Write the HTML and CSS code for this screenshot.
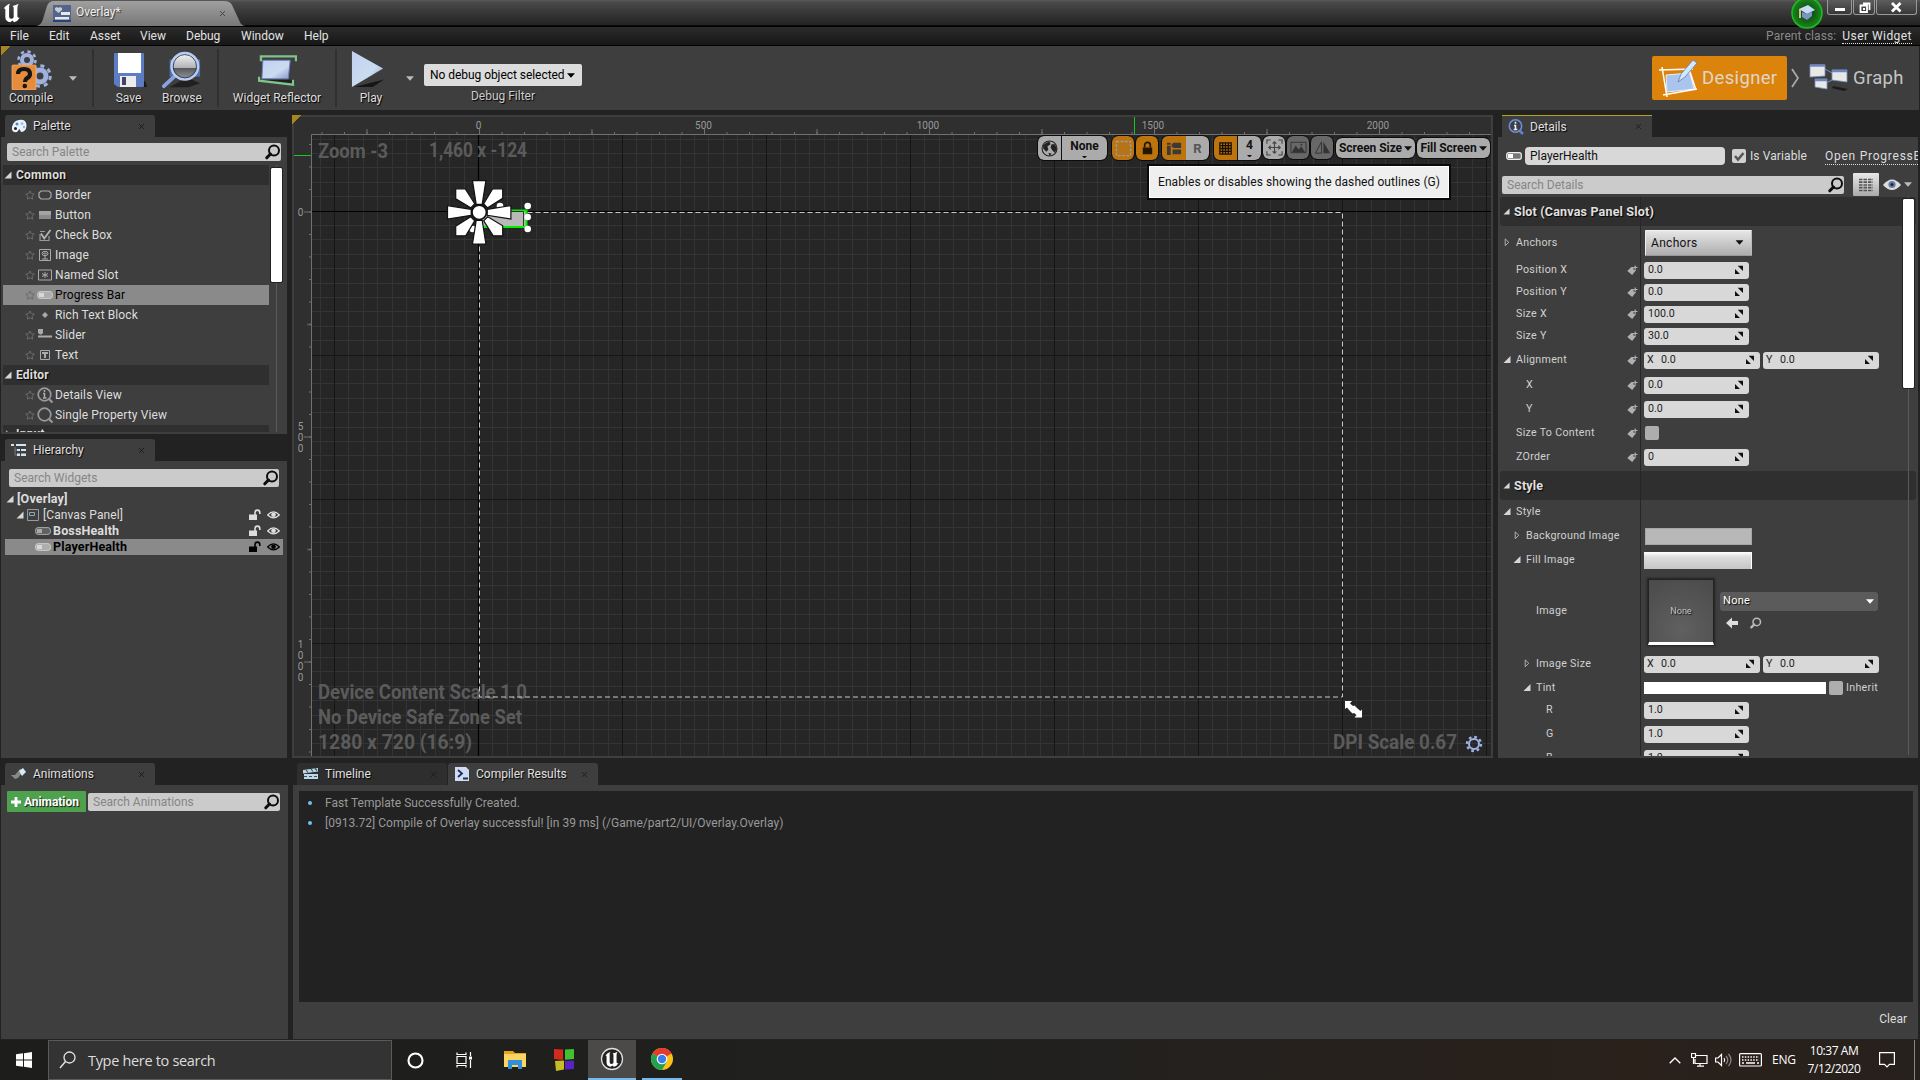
FILE: index.html
```html
<!DOCTYPE html>
<html lang="en">
<head>
<meta charset="utf-8">
<title>Overlay</title>
<link rel="stylesheet" href="styles.css">
</head>
<body>
<svg class="defs" width="0" height="0" aria-hidden="true">
  <defs>
    <linearGradient id="blue" x1="0" y1="0" x2="1" y2="1"><stop offset="0" stop-color="#c3d0f0"/><stop offset=".6" stop-color="#c9dcf0"/><stop offset="1" stop-color="#8596c8"/></linearGradient>
    <linearGradient id="steel" x1="0" y1="0" x2="0" y2="1"><stop offset="0" stop-color="#fafafa"/><stop offset=".55" stop-color="#b4b4b8"/><stop offset=".56" stop-color="#55565a"/><stop offset="1" stop-color="#9a9a9a"/></linearGradient>
  </defs>
  <symbol id="mag" viewBox="0 0 16 16"><circle cx="9" cy="6.500" r="5" fill="none" stroke="currentColor" stroke-width="2"/><path d="M5.500 10 1.800 13.800" stroke="currentColor" stroke-width="3" stroke-linecap="round"/></symbol>
  <symbol id="x" viewBox="0 0 8 8"><path d="M1.200 1.200l5.600 5.600M6.800 1.200L1.200 6.800" stroke="currentColor" stroke-width="1.100"/></symbol>
  <symbol id="star" viewBox="0 0 10 10"><path d="M5 .9l1.300 2.800 3 .4-2.200 2.100.5 3L5 7.700 2.400 9.200l.5-3L.7 4.100l3-.4z" fill="none" stroke="#6c6c6c"/></symbol>
  <symbol id="open" viewBox="0 0 8 8"><path d="M7.500 .5v7h-7z" fill="#d6d6d6"/></symbol>
  <symbol id="shut" viewBox="0 0 8 10"><path d="M2 1v7.500l4-3.700z" fill="none" stroke="#bbb"/></symbol>
  <symbol id="bar" viewBox="0 0 16 10"><rect x=".6" y="1.600" width="14.800" height="6.800" rx="2.500" fill="#606060" stroke="#aaa"/><rect x="2" y="3" width="5" height="4" fill="#aaa"/></symbol>
  <symbol id="barsel" viewBox="0 0 16 10"><rect x=".6" y="1.600" width="14.800" height="6.800" rx="2.500" fill="#adadad" stroke="#cacaca"/><rect x="2" y="3" width="5" height="4" fill="#d8d8d8"/></symbol>
  <symbol id="lock" viewBox="0 0 12 12"><rect x="0" y="5.500" width="8" height="5.500" fill="currentColor"/><path d="M6 6V3.500a2.300 2.300 0 0 1 4.800 0V5" fill="none" stroke="currentColor" stroke-width="1.600"/></symbol>
  <symbol id="eye" viewBox="0 0 14 10"><path d="M.7 5Q7-1.700 13.300 5 7 11 .7 5z" fill="none" stroke="currentColor" stroke-width="1.300"/><circle cx="7" cy="4.700" r="2.500" fill="currentColor"/></symbol>
  <symbol id="tag" viewBox="0 0 11 11"><path d="M.3 6L4.300 2h2.200v2.800h2.800L5.200 10z" fill="#b0b0b0"/><path d="M8.200 .5v4M6.200 2.500h4.300" stroke="#b0b0b0" stroke-width="1.200"/></symbol>
  <symbol id="spin" viewBox="0 0 10 10"><path d="M3.700 .7h5.300v5.300zM1 4v5h5z" fill="#111"/></symbol>
  <symbol id="down" viewBox="0 0 8 5"><path d="M0 .3h8L4 4.800z" fill="currentColor"/></symbol>
  <symbol id="ue" viewBox="0 0 24 24"><path d="M2 7Q5 2 10 1q-2 1.500-1.500 4v11q0 3 2.500 3 2 0 3-2V6q0-2-1.500-2.500Q17 2.500 20 1q-1.500 2-1.500 5v10q0 2.500 3 1.500Q19 22 14.500 23L12.500 21 10 23Q4 22 4 17V8q0-2-2-1z" fill="#fff"/></symbol>
</svg>

<div class="screen">
  <header class="titlebar">
    <svg class="logo" viewBox="0 0 24 24"><use href="#ue"/></svg>
    <div class="doc-tab">
      <svg class="tab-shape" viewBox="0 0 210 25" preserveAspectRatio="none"><defs><linearGradient id="tg" x2="0" y2="1"><stop stop-color="#a0a0a0"/><stop offset="1" stop-color="#777"/></linearGradient></defs><path d="M0 25Q5 25 7 18L11 5Q13 0 18 0H188Q194 0 196 4L203 19Q205 25 210 25z" fill="url(#tg)"/></svg>
      <svg class="doc-icon" viewBox="0 0 18 17"><path d="M0 0h18v17H0z" fill="#51658d"/><path d="M2 3l2-1 1.500 1L7 2l2 1v2L5.500 8 2 5z" fill="#ccc"/><path d="M8 7h9v3H8zM2 12h14v2.500H2z" fill="#e8e8e8"/><path d="M0 16h18" stroke="#27437d" stroke-width="2"/></svg>
      <span class="doc-name">Overlay*</span>
      <svg class="x" viewBox="0 0 8 8"><use href="#x"/></svg>
    </div>
    <svg class="tutorial" viewBox="0 0 32 29"><defs><radialGradient id="rg"><stop offset=".3" stop-color="#144b16"/><stop offset="1" stop-color="#178a1a"/></radialGradient></defs><circle cx="16" cy="13" r="15" fill="url(#rg)" stroke="#20bb22" stroke-width="1.500"/><path d="M8 9l9-4 7 5-8 4z" fill="#c6dcf5"/><path d="M11 12v5l5 3 5-4v-5l-5 3z" fill="#7796c0"/><path d="M9 9v9" stroke="#e5cf9d" stroke-width="1.800"/></svg>
    <div class="winbtns">
      <span class="wb wb1"><svg viewBox="0 0 24 15"><path d="M7 8h10v3H7z" fill="#fff"/></svg></span>
      <span class="wb wb2"><svg viewBox="0 0 22 15"><path d="M9 3.500h6.500v6.500M6.500 5.500H13V12H6.500z" fill="none" stroke="#fff" stroke-width="1.800"/><path d="M9 8h2v2H9z" fill="#fff"/></svg></span>
      <span class="wb wb3"><svg viewBox="0 0 40 15"><path d="M15 3l8.500 8.500M23.500 3L15 11.500" stroke="#fff" stroke-width="2.800"/></svg></span>
    </div>
  </header>

  <nav class="menubar">
    <span class="m1">File</span><span class="m2">Edit</span><span class="m3">Asset</span><span class="m4">View</span><span class="m5">Debug</span><span class="m6">Window</span><span class="m7">Help</span>
    <span class="parent">Parent class:</span><a class="userwidget">User Widget</a>
  </nav>

  <section class="toolbar">
    <i class="corner"></i>
    <div class="tool t-compile"><svg viewBox="0 0 42 40"><g fill="none" stroke="#9fb1dc"><circle cx="17" cy="10" r="5" stroke-width="4"/><circle cx="17" cy="10" r="8.500" stroke-width="2.500" stroke-dasharray="3.300 3.400"/><circle cx="30" cy="26" r="6" stroke-width="5"/><circle cx="30" cy="26" r="10.300" stroke-width="3" stroke-dasharray="4 4.100"/></g><rect x="2" y="15" width="24" height="25" rx="1" fill="#e58d3d" stroke="#f3b678" stroke-width=".7"/><path d="M8 24q0-5 6-5t6 5q0 3-3.500 4.500Q15 30 15 32" fill="none" stroke="#161616" stroke-width="4.200"/><circle cx="14.800" cy="36" r="2.300" fill="#161616"/></svg><span>Compile</span></div>
    <svg class="dd dd1" viewBox="0 0 8 5"><use href="#down"/></svg>
    <i class="sep s1"></i>
    <div class="tool t-save"><svg viewBox="0 0 34 40"><path d="M5 37h29l-2-6z" fill="#171717"/><path d="M1 4q0-1 1-1h28q1 0 1 1v32q0 1-1 1H5l-4-3z" fill="#5d7cc4"/><path d="M5 3h23v20H5z" fill="#fff"/><path d="M7 26h16v11H7z" fill="#ececec"/><path d="M9 27h4v8H9z" fill="#446"/></svg><span>Save</span></div>
    <div class="tool t-browse"><svg viewBox="0 0 42 40"><path d="M8 38l18-10 14 6-12 4z" fill="#202020"/><path d="M8 9h32v18H8z" fill="#5370a8"/><path d="M2 37L14 26" stroke="#86a3e0" stroke-width="4" stroke-linecap="round"/><circle cx="24" cy="16" r="14" fill="url(#steel)" stroke="#b9cdf4" stroke-width="2.500"/><circle cx="24" cy="16" r="12.200" fill="none" stroke="#33405e"/></svg><span>Browse</span></div>
    <i class="sep s2"></i>
    <div class="tool t-widget"><svg viewBox="0 0 40 40"><path d="M8 30h30v5L8 33z" fill="#202020"/><path d="M5 10h28l-2 19H4z" fill="url(#blue)" stroke="#6b7fc2"/><path d="M3 11V6h36v5M1 27v4l35 4v-5" fill="none" stroke="#7fc48a" stroke-width="2.400"/></svg><span>Widget Reflector</span></div>
    <i class="sep s3"></i>
    <div class="tool t-play"><svg viewBox="0 0 36 40"><path d="M3 38l32-8-12 8z" fill="#161616"/><path d="M1 0l33 18.500L1 38z" fill="url(#blue)"/></svg><span>Play</span></div>
    <svg class="dd dd2" viewBox="0 0 8 5"><use href="#down"/></svg>
    <div class="debug"><div class="debug-combo"><span>No debug object selected</span><svg viewBox="0 0 8 5"><use href="#down"/></svg></div><span class="debug-label">Debug Filter</span></div>
    <div class="modes">
      <div class="designer"><svg viewBox="0 0 40 40"><path d="M8 17l24-2 4 16-27 3z" fill="#a9c5ee" stroke="#e6efff"/><path d="M1 12l34-1M5 37l34-6M4 9l5 30M30 8l8 24" stroke="#fff" stroke-width="1.500"/><path d="M20 24l3-8L35 2l4 3-12 14z" fill="#d5e6ff" stroke="#5f7bb5" stroke-width=".8"/></svg><span>Designer</span></div>
      <svg class="chev" viewBox="0 0 8 20"><path d="M1 1l6 9-6 9" fill="none" stroke="#aaa" stroke-width="1.800"/></svg>
      <svg class="gicon" viewBox="0 0 40 28"><path d="M16 5l7 4M15 20l8-4" stroke="#7690b5"/><path d="M24 22l15 3-4 2-12-3z" fill="#1b1b1b"/><g fill="#e8e8e8" stroke="#7c93ba" stroke-width=".8"><path d="M1 1h15v11l-15 1zM23 6h15v12l-15-2zM6 15h12v10l-12-2z"/></g><path d="M1 1.500h15M23 7h15M6 16h12" stroke="#6d86c0" stroke-width="2.500"/></svg>
      <span class="graph">Graph</span>
    </div>
  </section>

  <main class="upper">
    <div class="leftcol">
      <section class="panel palette">
        <div class="tabs"><div class="tab"><svg class="ticon" viewBox="0 0 16 14"><path d="M1 8Q2 2 8 1q7-1 7.500 5Q15.500 13 10 13L8.500 10 6 13q-6 1-5-5z" fill="#eaf2fb"/><circle cx="6" cy="5" r="1.500" fill="#4b88c8"/><circle cx="11" cy="4.500" r="1.500" fill="#9cc4ee"/><circle cx="4.500" cy="9.500" r="1.500" fill="#222"/><circle cx="13" cy="8" r="1.200" fill="#8db8ea"/></svg><span>Palette</span><svg class="x" viewBox="0 0 8 8"><use href="#x"/></svg></div></div>
        <div class="pbody">
          <div class="search sp"><span>Search Palette</span><svg viewBox="0 0 16 16"><use href="#mag"/></svg></div>
          <div class="plist">
            <div class="rows">
              <div class="cat"><svg viewBox="0 0 8 8"><use href="#open"/></svg>Common</div>
              <div class="row"><svg class="st"><use href="#star"/></svg><svg class="ic" viewBox="0 0 16 16"><path d="M4 4h8l2 2v4l-2 2H4l-2-2V6z" fill="none" stroke="#aaa" stroke-width="1.200"/></svg>Border</div>
              <div class="row"><svg class="st"><use href="#star"/></svg><svg class="ic" viewBox="0 0 16 16"><path d="M2 4h12v8H2z" fill="#8a8a8a"/><path d="M2 4h12v4H2z" fill="#a4a4a4"/></svg>Button</div>
              <div class="row"><svg class="st"><use href="#star"/></svg><svg class="ic" viewBox="0 0 16 16"><path d="M8 4.500H3M3 7v6.500h9V9" fill="none" stroke="#999" stroke-width="1.200"/><path d="M4 6.500l3.200 5L13.500 3" fill="none" stroke="#b5b5b5" stroke-width="1.800"/></svg>Check Box</div>
              <div class="row"><svg class="st"><use href="#star"/></svg><svg class="ic" viewBox="0 0 16 16"><path d="M2.500 2.500h11v11h-11zM5 12h6M8 8v4" fill="none" stroke="#aaa"/><ellipse cx="8" cy="6.500" rx="3" ry="2.200" fill="none" stroke="#aaa"/><path d="M6 6.500h4M8 5v3" stroke="#888"/></svg>Image</div>
              <div class="row"><svg class="st"><use href="#star"/></svg><svg class="ic" viewBox="0 0 16 16"><path d="M1.500 3h13v10h-13z" fill="none" stroke="#aaa"/><path d="M8 5v6M5 6.500l6 3M11 6.500l-6 3" stroke="#aaa"/></svg>Named Slot</div>
              <div class="row sel"><svg class="st"><use href="#star"/></svg><svg class="ic" viewBox="0 0 16 10"><use href="#barsel"/></svg>Progress Bar</div>
              <div class="row"><svg class="st"><use href="#star"/></svg><svg class="ic" viewBox="0 0 16 16"><path d="M8 5l3 3-3 3-3-3z" fill="#aaa"/></svg>Rich Text Block</div>
              <div class="row"><svg class="st"><use href="#star"/></svg><svg class="ic" viewBox="0 0 16 16"><path d="M1 2h5v4L4.500 7.500H3L1 6zM1 8.500h14v2H1z" fill="#aaa"/></svg>Slider</div>
              <div class="row"><svg class="st"><use href="#star"/></svg><svg class="ic" viewBox="0 0 16 16"><path d="M3.500 3.500h9v9h-9z" fill="none" stroke="#aaa"/><path d="M5 6h6M8 6v5" stroke="#aaa" stroke-width="2"/></svg>Text</div>
              <div class="cat"><svg viewBox="0 0 8 8"><use href="#open"/></svg>Editor</div>
              <div class="row"><svg class="st"><use href="#star"/></svg><svg class="ic" viewBox="0 0 16 16"><circle cx="7.500" cy="7.500" r="6.300" fill="none" stroke="#999" stroke-width="1.700"/><path d="M12 12l3.500 3.500" stroke="#999" stroke-width="2.200"/><path d="M7.500 3v2M6 6.500h1.500V11M6 11h3.500" fill="none" stroke="#aaa" stroke-width="1.500"/></svg>Details View</div>
              <div class="row"><svg class="st"><use href="#star"/></svg><svg class="ic" viewBox="0 0 16 16"><circle cx="7.500" cy="7.500" r="6.300" fill="none" stroke="#999" stroke-width="1.700"/><path d="M12 12l3.500 3.500" stroke="#999" stroke-width="2.200"/></svg>Single Property View</div>
              <div class="cat part"><svg viewBox="0 0 8 10"><use href="#shut"/></svg>Input</div>
            </div>
            <div class="scroll"><i></i></div>
          </div>
        </div>
      </section>

      <section class="panel hierarchy">
        <div class="tabs"><div class="tab"><svg class="ticon" viewBox="0 0 16 14"><path d="M0 1h3v2H0zM5 1h10v2H5zM6 6h3v2H6zM10 6h5v2h-5zM6 10.500h3v2.500H6zM10 10.500h5v2.500h-5z" fill="#cfe5f2"/><path d="M4 4v8M4 7h2M4 12h2" stroke="#778"/></svg><span>Hierarchy</span><svg class="x" viewBox="0 0 8 8"><use href="#x"/></svg></div></div>
        <div class="pbody">
          <div class="search sh"><span>Search Widgets</span><svg viewBox="0 0 16 16"><use href="#mag"/></svg></div>
          <div class="trees">
            <div class="tree d0"><svg class="ar" viewBox="0 0 8 8"><use href="#open"/></svg><b>[Overlay]</b></div>
            <div class="tree d1"><svg class="ar" viewBox="0 0 8 8"><use href="#open"/></svg><svg class="cp" viewBox="0 0 12 12"><path d="M.5 .5h11v11H.5z" fill="none" stroke="#999"/><path d="M2.500 3.500h5v3h-5z" fill="none" stroke="#8ab"/></svg><span>[Canvas Panel]</span><svg class="lk" viewBox="0 0 12 12"><use href="#lock"/></svg><svg class="ey" viewBox="0 0 14 10"><use href="#eye"/></svg></div>
            <div class="tree d2"><svg class="pb" viewBox="0 0 16 10"><use href="#bar"/></svg><b>BossHealth</b><svg class="lk" viewBox="0 0 12 12"><use href="#lock"/></svg><svg class="ey" viewBox="0 0 14 10"><use href="#eye"/></svg></div>
            <div class="tree d2 sel"><svg class="pb" viewBox="0 0 16 10"><use href="#barsel"/></svg><b>PlayerHealth</b><svg class="lk" viewBox="0 0 12 12"><use href="#lock"/></svg><svg class="ey" viewBox="0 0 14 10"><use href="#eye"/></svg></div>
          </div>
        </div>
      </section>
    </div>

    <section class="viewport">
      <svg class="canvas" viewBox="294 117 1197 639">
        <defs>
          <pattern id="grid" patternUnits="userSpaceOnUse" x="478" y="211" width="144" height="144">
            <g stroke="#343434" stroke-width="1"><path d="M14.500 0v144M29.500 0v144M43.500 0v144M58.500 0v144M72.500 0v144M86.500 0v144M101.500 0v144M115.500 0v144M130.500 0v144"/><path d="M0 14.500h144M0 28.500h144M0 43.500h144M0 57.500h144M0 72.500h144M0 86.500h144M0 100.500h144M0 115.500h144M0 129.500h144"/></g>
            <path d="M0 .5H144M.5 0V144" stroke="#151515"/>
          </pattern>
          <pattern id="rh" patternUnits="userSpaceOnUse" x="479" y="0" width="22.500" height="135"><path d="M.5 132v3" stroke="#707070"/></pattern>
          <pattern id="rhm" patternUnits="userSpaceOnUse" x="479" y="0" width="112.500" height="135"><path d="M.5 129v6" stroke="#707070"/></pattern>
          <pattern id="rv" patternUnits="userSpaceOnUse" x="294" y="211.500" width="18" height="22.500"><path d="M15 .5h3" stroke="#707070"/></pattern>
          <pattern id="rvm" patternUnits="userSpaceOnUse" x="294" y="211.500" width="18" height="225"><path d="M10 .5h8M13 113h5" stroke="#707070"/></pattern>
        </defs>
        <path d="M294 117h1197v639H294z" fill="#2f2f2f"/>
        <path d="M312 135h1179v621H312z" fill="#262626"/>
        <path d="M312 135h1179v621H312z" fill="url(#grid)"/>
        <path d="M478.500 135v621M312 211.500h1179" stroke="#000" stroke-width="1.200"/>
        <path d="M312 117h1179v18H312z" fill="url(#rh)"/><path d="M312 117h1179v18H312z" fill="url(#rhm)"/>
        <path d="M294 135h18v621h-18z" fill="url(#rv)"/><path d="M294 135h18v621h-18z" fill="url(#rvm)"/>
        <path d="M311.500 756V134.500H1491" fill="none" stroke="#707070"/>
        <g class="ruler" text-anchor="middle">
          <text x="478.500" y="128.500">0</text><text x="703.500" y="128.500">500</text><text x="928" y="128.500">1000</text><text x="1153" y="128.500">1500</text><text x="1378" y="128.500">2000</text>
          <text x="300.500" y="215.500">0</text><text x="300.500" y="429.500">5</text><text x="300.500" y="440.500">0</text><text x="300.500" y="451.500">0</text>
          <text x="300.500" y="648">1</text><text x="300.500" y="659">0</text><text x="300.500" y="670">0</text><text x="300.500" y="681">0</text>
        </g>
        <path d="M1134.500 117v17M294 155.500h17" stroke="#17c81f"/>
        <g class="hud">
          <text x="318" y="158" textLength="70" lengthAdjust="spacingAndGlyphs">Zoom -3</text>
          <text x="429" y="157" textLength="98" lengthAdjust="spacingAndGlyphs">1,460 x -124</text>
          <text x="318" y="699" textLength="209" lengthAdjust="spacingAndGlyphs">Device Content Scale 1.0</text>
          <text x="318" y="724" textLength="204" lengthAdjust="spacingAndGlyphs">No Device Safe Zone Set</text>
          <text x="318" y="749" textLength="154" lengthAdjust="spacingAndGlyphs">1280 x 720 (16:9)</text>
          <text x="1333" y="749" textLength="124" lengthAdjust="spacingAndGlyphs">DPI Scale 0.67</text>
        </g>
        <path d="M479.500 212.500H1342.500V697H479.500z" fill="none" stroke="#c9c9c9" stroke-dasharray="5 3"/>
        <path d="M480 210.500h46.500v16.500H480z" fill="#b9b9b9" stroke="#00f000" stroke-width="2"/><path d="M481 211.500H523.500V226" fill="none" stroke="#333" stroke-width="1"/>
        <g fill="#fff"><circle cx="527.700" cy="206" r="3.300"/><circle cx="527.700" cy="217" r="3.300"/><circle cx="527.700" cy="229" r="3.300"/><circle cx="500" cy="206" r="3.300"/><circle cx="472.700" cy="229" r="3.300"/></g>
        <g fill="#fff" stroke="#111" stroke-width="1.200" transform="translate(479.200 212.300)">
          <path id="p1" d="M-6.700-31.700H6.700L3-8H-3z"/><use href="#p1" transform="rotate(90)"/><use href="#p1" transform="rotate(180)"/><use href="#p1" transform="rotate(270)"/>
          <path id="p2" d="M23.500-23.500V-14L8.500-4.500 4.500-8.500 13.500-23.500z"/><use href="#p2" transform="rotate(90)"/><use href="#p2" transform="rotate(180)"/><use href="#p2" transform="rotate(270)"/>
          <circle r="7.300" stroke-width="1.800"/>
        </g>
        <path d="M1345 701h7l-2 2.500 3 2.500 1.500-.5 3 3 3 2.500 1.500-1.500v8h-7.500l2-2.500-2.500-2-1.500.5-3-3-2.500-3-2 1.500z" fill="#fff"/>
        <g transform="translate(1474 744)" fill="none" stroke="#9fb2e2"><circle r="5" stroke-width="2"/><circle r="7" stroke-width="2.400" stroke-dasharray="2.700 2.800"/></g>
      </svg>
      <i class="corner"></i>
      <div class="vtools">
        <div class="vg g1"><span class="w23"><svg viewBox="0 0 16 16"><circle cx="8" cy="8" r="7" fill="none" stroke="#222"/><path d="M2 5q3-3 6-3.500L9 4 6 6 7 9 5 11 2 8zM10 4l3 0 2 4-2 4-2-2-2-3zM7 12l3 1-2 2z" fill="#222"/></svg></span><span class="w46 stack"><b>None</b><em></em></span></div>
        <div class="vg g2 or"><span><svg viewBox="0 0 18 18"><path d="M1.500 1.500h15v15h-15z" fill="#b5741a" stroke="#9c9c9c" stroke-width="1.500" stroke-dasharray="3 1.500"/></svg></span></div>
        <div class="vg g3 or"><span><svg viewBox="0 0 18 18"><path d="M4 8h10v7H4z" fill="#241600"/><path d="M6 8V5.500a3 3 0 0 1 6 0V8" fill="none" stroke="#241600" stroke-width="1.800"/></svg></span></div>
        <div class="vg g4"><span class="w24 or"><svg viewBox="0 0 18 18"><path d="M1 3h4v2H1zM1 6h4v10H1zM6 4.500L8 3h8v5.500H8L6 7zM7 10h9v5H7z" fill="#3c3a36"/></svg></span><span class="w23 rr"><b>R</b></span></div>
        <div class="vg g5"><span class="w23 or"><svg viewBox="0 0 18 18"><path d="M3 3h12v12H3zM3 6h12M3 9h12M3 12h12M6 3v12M9 3v12M12 3v12" fill="none" stroke="#1b1100" stroke-width="1.400"/></svg></span><span class="w24 stack"><b>4</b><em></em></span></div>
        <div class="vg g6"><span><svg viewBox="0 0 18 18"><path d="M1 5V1h4M13 1h4v4M17 13v4h-4M5 17H1v-4M9 3v12M3 9h12M7 5l2-2 2 2M7 13l2 2 2-2M5 7L3 9l2 2M13 7l2 2-2 2" fill="none" stroke="#444" stroke-width="1.200"/></svg></span></div>
        <div class="vg g7 dim"><span><svg viewBox="0 0 18 18"><path d="M1 3.500h16v11H1z" fill="none" stroke="#333"/><path d="M2 14l4-7 3 4 3-3 4 6z" fill="#333"/><circle cx="12" cy="6" r="1" fill="#333"/></svg></span></div>
        <div class="vg g8 dim"><span><svg viewBox="0 0 18 18"><path d="M8 3v12H1.500z" fill="none" stroke="#333"/><path d="M10 3v12h7z" fill="#333"/></svg></span></div>
        <div class="vg g9"><b>Screen Size</b><svg class="vd" viewBox="0 0 8 5"><use href="#down"/></svg></div>
        <div class="vg g10"><b>Fill Screen</b><svg class="vd" viewBox="0 0 8 5"><use href="#down"/></svg></div>
      </div>
      <div class="tooltip">Enables or disables showing the dashed outlines (G)</div>
    </section>

    <section class="panel details">
      <div class="tabs"><div class="tab active"><svg class="ticon big" viewBox="0 0 16 16"><path d="M11 11l4 4" stroke="#5f83d6" stroke-width="2.500"/><circle cx="7.500" cy="7" r="6.200" fill="#3b3f49" stroke="#6f8ed8" stroke-width="1.500"/><path d="M7.500 2.800v2M6 6.500h1.500v4M5.700 10.500h3.600" fill="none" stroke="#eee" stroke-width="1.600"/></svg><span>Details</span><svg class="x" viewBox="0 0 8 8"><use href="#x"/></svg></div></div>
      <div class="pbody">
        <div class="namerow">
          <svg class="pb" viewBox="0 0 16 8"><rect x=".7" y=".7" width="14.600" height="6.600" rx="2" fill="#777" stroke="#eee" stroke-width="1.200"/><path d="M2 2h5v4H2z" fill="#fff"/></svg>
          <div class="nameinput">PlayerHealth</div>
          <i class="cb"><svg viewBox="0 0 14 14"><path d="M3 7l3 3.500L11.500 4" fill="none" stroke="#555" stroke-width="2.500"/></svg></i>
          <span class="isvar">Is Variable</span><a class="openpb">Open ProgressB</a>
        </div>
        <div class="searchrow">
          <div class="search"><span>Search Details</span><svg viewBox="0 0 16 16"><use href="#mag"/></svg></div>
          <div class="matrix"><svg viewBox="0 0 14 14"><path d="M0 1.500h14M0 4.200h14M0 7h14M0 9.700h14M0 12.500h14" stroke="#555" stroke-width="1.700" stroke-dasharray="3.500 1"/></svg></div>
          <svg class="deye" viewBox="0 0 18 12"><path d="M0 6Q9-5 18 6 9 16 0 6z" fill="#ddd"/><circle cx="9" cy="5.500" r="3.600" fill="#667ba5"/><circle cx="9" cy="5.500" r="1.500" fill="#223"/></svg>
          <svg class="dd3" viewBox="0 0 8 5"><use href="#down"/></svg>
        </div>
        <div class="props">
          <div class="head"><svg class="ar" viewBox="0 0 8 8"><use href="#open"/></svg><span>Slot (Canvas Panel Slot)</span></div>
          <div class="p h33 l1"><svg class="ar" viewBox="0 0 8 10"><use href="#shut"/></svg><label>Anchors</label><div class="v"><div class="anchors">Anchors<svg viewBox="0 0 8 5"><use href="#down"/></svg></div></div></div>
          <div class="p h22 l1"><label>Position X</label><svg class="tg"><use href="#tag"/></svg><div class="v"><div class="n">0.0<svg><use href="#spin"/></svg></div></div></div>
          <div class="p h22 l1"><label>Position Y</label><svg class="tg"><use href="#tag"/></svg><div class="v"><div class="n">0.0<svg><use href="#spin"/></svg></div></div></div>
          <div class="p h22 l1"><label>Size X</label><svg class="tg"><use href="#tag"/></svg><div class="v"><div class="n">100.0<svg><use href="#spin"/></svg></div></div></div>
          <div class="p h22 l1"><label>Size Y</label><svg class="tg"><use href="#tag"/></svg><div class="v"><div class="n">30.0<svg><use href="#spin"/></svg></div></div></div>
          <div class="p h26 l1"><svg class="ar" viewBox="0 0 8 8"><use href="#open"/></svg><label>Alignment</label><svg class="tg"><use href="#tag"/></svg><div class="v"><div class="n xy"><u>X</u>0.0<svg><use href="#spin"/></svg></div><div class="n xy"><u>Y</u>0.0<svg><use href="#spin"/></svg></div></div></div>
          <div class="p h24 l2"><label>X</label><svg class="tg"><use href="#tag"/></svg><div class="v"><div class="n">0.0<svg><use href="#spin"/></svg></div></div></div>
          <div class="p h24 l2"><label>Y</label><svg class="tg"><use href="#tag"/></svg><div class="v"><div class="n">0.0<svg><use href="#spin"/></svg></div></div></div>
          <div class="p h24 l1"><label>Size To Content</label><svg class="tg"><use href="#tag"/></svg><div class="v"><i class="cb off"></i></div></div>
          <div class="p h24 l1"><label>ZOrder</label><svg class="tg"><use href="#tag"/></svg><div class="v"><div class="n">0<svg><use href="#spin"/></svg></div></div></div>
          <div class="head second"><svg class="ar" viewBox="0 0 8 8"><use href="#open"/></svg><span>Style</span></div>
          <div class="p h24 l1"><svg class="ar" viewBox="0 0 8 8"><use href="#open"/></svg><label>Style</label></div>
          <div class="p h24 l2"><svg class="ar" viewBox="0 0 8 10"><use href="#shut"/></svg><label>Background Image</label><div class="v"><div class="sw bgsw"></div></div></div>
          <div class="p h24 l2"><svg class="ar" viewBox="0 0 8 8"><use href="#open"/></svg><label>Fill Image</label><div class="v"><div class="sw fillsw"></div></div></div>
          <div class="p h78 l3"><label>Image</label><div class="v"><div class="thumb">None</div><div class="asset"><div class="acombo">None<svg viewBox="0 0 8 5"><use href="#down"/></svg></div><div class="abtns"><svg viewBox="0 0 12 12"><path d="M0 6l6-5.500v3.500h6v4H6v3.500z" fill="#ddd"/></svg><svg viewBox="0 0 16 16"><use href="#mag"/></svg></div></div></div></div>
          <div class="p h28 l3"><svg class="ar" viewBox="0 0 8 10"><use href="#shut"/></svg><label>Image Size</label><div class="v"><div class="n xy"><u>X</u>0.0<svg><use href="#spin"/></svg></div><div class="n xy"><u>Y</u>0.0<svg><use href="#spin"/></svg></div></div></div>
          <div class="p h20 l3"><svg class="ar" viewBox="0 0 8 8"><use href="#open"/></svg><label>Tint</label><div class="v"><div class="tint"></div><i class="cb off"></i><span>Inherit</span></div></div>
          <div class="p h24 l4"><label>R</label><div class="v"><div class="n">1.0<svg><use href="#spin"/></svg></div></div></div>
          <div class="p h24 l4"><label>G</label><div class="v"><div class="n">1.0<svg><use href="#spin"/></svg></div></div></div>
          <div class="p h24 l4"><label>B</label><div class="v"><div class="n">1.0<svg><use href="#spin"/></svg></div></div></div>
          <div class="scroll"><i></i></div>
        </div>
      </div>
    </section>
  </main>

  <section class="lower">
    <section class="panel anims">
      <div class="tabs"><div class="tab"><svg class="ticon" viewBox="0 0 16 14"><path d="M0 8l4 4 3-1 6-8-4-1-5 6z" fill="#888"/><path d="M8 4l4-3 3 4-4 4z" fill="#d6ebf8"/></svg><span>Animations</span><svg class="x" viewBox="0 0 8 8"><use href="#x"/></svg></div></div>
      <div class="pbody arow"><div class="addanim"><svg viewBox="0 0 10 10"><path d="M3.600 0h2.800v3.600H10v2.800H6.400V10H3.600V6.400H0V3.600h3.600z" fill="#fff"/></svg>Animation</div><div class="search"><span>Search Animations</span><svg viewBox="0 0 16 16"><use href="#mag"/></svg></div></div>
    </section>
    <section class="panel results">
      <div class="tabs">
        <div class="tab idle"><svg class="ticon" viewBox="0 0 16 14"><path d="M0 3l15-2v3.500L0 6.500zM1 7h14v5H1z" fill="#bcd6ec"/><path d="M3 3l2 2.500M8 2l2 2.500M12 1.500l2 2M1 9.500h3M6 9.500h3M11 9.500h3" stroke="#355" stroke-width="1.200"/></svg><span>Timeline</span><svg class="x" viewBox="0 0 8 8"><use href="#x"/></svg></div>
        <div class="tab"><svg class="ticon big" viewBox="0 0 16 16"><path d="M1 1h11l3 3v11H1z" fill="#cfdcf4"/><path d="M4 4l4 3.500L4 11M9 12.500h5" fill="none" stroke="#1c2f55" stroke-width="1.800"/></svg><span>Compiler Results</span><svg class="x" viewBox="0 0 8 8"><use href="#x"/></svg></div>
      </div>
      <div class="pbody">
        <div class="log"><p>Fast Template Successfully Created.</p><p>[0913.72] Compile of Overlay successful! [in 39 ms] (/Game/part2/UI/Overlay.Overlay)</p></div>
        <div class="clear">Clear</div>
      </div>
    </section>
  </section>

  <footer class="taskbar">
    <svg class="win" viewBox="0 0 16 16"><path d="M0 2.300l7-1v6.300H0zM8 1.200L16 0v7.600H8zM0 8.500h7v6.300l-7-1zM8 8.500h8V16l-8-1.200z" fill="#fff"/></svg>
    <div class="tsearch"><svg viewBox="0 0 17 18"><circle cx="10.500" cy="6.500" r="5.500" fill="none" stroke="#e6e6e6" stroke-width="1.300"/><path d="M6.500 10.500L1 17" stroke="#e6e6e6" stroke-width="1.400"/></svg><span>Type here to search</span></div>
    <svg class="cort" viewBox="0 0 16 16"><circle cx="8" cy="8" r="6.600" fill="none" stroke="#fff" stroke-width="2"/></svg>
    <svg class="tview" viewBox="0 0 17 16"><path d="M1 .5v2h9v-2M1 15.500v-2h9v2M1 4.500h9v7H1z" fill="none" stroke="#fff" stroke-width="1.200"/><path d="M14.500 0v4M14.500 8v8" stroke="#fff" stroke-width="1.200"/><path d="M13 4.500h3v3h-3z" fill="#fff"/></svg>
    <svg class="fold" viewBox="0 0 22 18"><path d="M0 0h9l2 2h11v14H0z" fill="#e8a317"/><path d="M0 3h22v13H0z" fill="#fcd462"/><path d="M4 9h14v9h-4v-4H8v4H4z" fill="#2f8fdd"/></svg>
    <svg class="cube" viewBox="0 0 22 24"><path d="M1 1l9 .5V12L1 11z" fill="#d22a1d"/><path d="M12 1.500l9-.5v10l-9 .8z" fill="#3fc22c"/><path d="M2 13l9-.5v9L3 23z" fill="#c5bd22"/><path d="M12 13l9-.5V21l-9 .5z" fill="#5a22c4"/></svg>
    <div class="uapp"><svg viewBox="0 0 24 24"><circle cx="12" cy="12" r="10.500" fill="#222" stroke="#ddd" stroke-width="1.300"/><g transform="translate(3.800 4) scale(.69)"><use href="#ue" width="24" height="24"/></g></svg></div>
    <div class="capp"><svg viewBox="0 0 24 24"><circle cx="12" cy="12" r="11" fill="#fbc116"/><path d="M12 12L2.470 6.500A11 11 0 0 1 21.530 6.500z" fill="#e33b2e"/><path d="M2.470 6.500A11 11 0 0 0 12 23L16.800 14.700 12 12z" fill="#25a050"/><circle cx="12" cy="12" r="5.300" fill="#fff"/><circle cx="12" cy="12" r="4.200" fill="#3b7ded"/></svg></div>
    <div class="tray">
      <svg class="caret" viewBox="0 0 12 7"><path d="M.7 6.300L6 1l5.300 5.300" fill="none" stroke="#fff" stroke-width="1.300"/></svg>
      <svg class="mon" viewBox="0 0 17 14"><path d="M5 2.500h11v8H4V6M9 10.500v3M6 13.200h7M.5 .5h4v4h-4zM2.500 5v6" fill="none" stroke="#fff" stroke-width="1.200"/></svg>
      <svg class="spk" viewBox="0 0 17 14"><path d="M.6 5h2.400L6.500 1.500v11L3 9H.6z" fill="none" stroke="#fff" stroke-width="1.200"/><path d="M9 5q1.500 2 0 4" fill="none" stroke="#fff" stroke-width="1.200"/><path d="M11 3q3.500 4 0 8M13.500 1q5 6 0 12" fill="none" stroke="#888" stroke-width="1.200"/></svg>
      <svg class="kbd" viewBox="0 0 23 14"><rect x=".6" y=".6" width="21.800" height="12.400" rx="1" fill="none" stroke="#fff" stroke-width="1.200"/><path d="M3 4h17M3 7h17" stroke="#fff" stroke-width="1.300" stroke-dasharray="1.500 1.300"/><path d="M3 10h2M7 10h9M18 10h2" stroke="#fff" stroke-width="1.300"/></svg>
      <span class="eng">ENG</span>
      <div class="clock"><span>10:37 AM</span><span>7/12/2020</span></div>
      <svg class="note" viewBox="0 0 16 16"><path d="M.6 .6h14.800v11.800H10.500L8 15l-2.500-2.600H.6z" fill="none" stroke="#fff" stroke-width="1.200"/></svg>
      <i class="edge"></i>
    </div>
  </footer>
</div>
</body>
</html>
```
FILE: styles.css
```css
* { box-sizing: border-box; }
body { margin: 0; background: #222; overflow: hidden; font: 12px/1 Roboto, "Liberation Sans", sans-serif; color: #ddd; }
svg { display: block; flex: none; }
i, u, em { font-style: normal; text-decoration: none; }
.defs { position: absolute; }
.screen { width: 1920px; height: 1080px; display: flex; flex-direction: column; overflow: hidden; white-space: nowrap; }

/* title bar */
.titlebar { height: 26px; flex: none; display: flex; align-items: flex-start; background: linear-gradient(#5a5a5a 0, #484848 10%, #2b2b2b 80%, #242424); border-bottom: 1px solid #0a0a0a; }
.logo { width: 24px; height: 20px; margin: 3px 0 0 0; }
.doc-tab { position: relative; width: 210px; height: 25px; margin: 1px 0 0 12px; display: flex; align-items: center; padding-left: 17px; }
.tab-shape { position: absolute; inset: 0; width: 210px; height: 25px; }
.doc-icon, .doc-name, .doc-tab .x { position: relative; }
.doc-icon { width: 18px; height: 17px; }
.doc-name { margin-left: 5px; color: #eee; text-shadow: 1px 1px 1px #333; width: 143px; margin-top: -3px; }
.doc-tab .x { width: 7px; height: 7px; color: #444; }
.tutorial { width: 32px; height: 29px; margin-left: auto; position: relative; z-index: 3; }
.winbtns { display: flex; margin: 0 3px 0 4px; gap: 1px; }
.wb { height: 15px; border: 1px solid #999; border-top: 0; border-radius: 0 0 3px 3px; background: linear-gradient(#5d5d5d, #383838); overflow: hidden; }
.wb svg { height: 15px; }
.wb1 { width: 25px; } .wb2 { width: 22px; } .wb3 { width: 41px; }

/* menu */
.menubar { height: 20px; flex: none; display: flex; align-items: center; background: linear-gradient(#2b2b2b, #171717); border-top: 1px solid #000; border-bottom: 1px solid #000; color: #e2e2e2; padding: 0 8px 0 10px; }
.m1 { width: 39px; } .m2 { width: 41px; } .m3 { width: 50px; } .m4 { width: 46px; } .m5 { width: 55px; } .m6 { width: 63px; }
.parent { margin-left: auto; color: #8a8a8a; margin-right: 6px; margin-top: -1px; letter-spacing: .1px; }
.userwidget { border-bottom: 1px dotted #ddd; padding-bottom: 1px; margin-top: 2px; letter-spacing: .45px; }

/* toolbar */
.toolbar { position: relative; height: 64px; flex: none; display: flex; margin: 0 1px; padding-top: 4px; background: #3e3e3e; text-shadow: 1px 1px 1px #000; }
.corner { position: absolute; left: 0; top: 0; width: 10px; height: 10px; background: linear-gradient(135deg, #a8861e 50%, transparent 50%); }
.tool { display: flex; flex-direction: column; align-items: center; gap: 2px; }
.tool svg { height: 40px; }
.t-compile { width: 60px; } .t-compile svg { width: 42px; }
.dd, .dd3 { width: 8px; height: 5px; color: #bbb; }
.dd { margin-top: 26px; }
.dd1 { margin-left: 8px; }
.sep { width: 2px; height: 58px; background: #303030; margin-top: -1px; }
.s1 { margin-left: 15px; }
.t-save { width: 55px; margin-left: 7px; } .t-save svg { width: 34px; margin-left: 2px; }
.t-browse { width: 52px; margin-left: 0; } .t-browse svg { width: 40px; }
.s2 { margin-left: 9px; }
.t-widget { width: 118px; margin-left: -1px; } .t-widget svg { width: 39px; }
.s3 { margin-left: -1px; }
.t-play { width: 66px; margin-left: 1px; } .t-play svg { width: 34px; margin-left: -6px; }
.dd2 { margin-left: 2px; }
.debug { margin: 14px 0 0 10px; display: flex; flex-direction: column; align-items: center; gap: 4px; }
.debug-combo { width: 158px; height: 22px; background: #dcdcdc; color: #000; border-radius: 2px; display: flex; align-items: center; justify-content: space-between; padding: 0 7px 0 6px; text-shadow: none; letter-spacing: -.05px; }
.debug-combo svg { width: 8px; height: 5px; }
.debug-label { color: #ccc; }
.modes { margin-left: auto; display: flex; align-items: center; height: 44px; margin-top: 6px; font-size: 18.500px; text-shadow: none; color: #c4c4c4; }
.designer { width: 135px; height: 44px; background: #dc830c; border-radius: 2px; display: flex; align-items: center; color: #ded7cb; }
.designer svg { width: 40px; height: 40px; margin: 0 4px 0 6px; }
.designer span, .graph { letter-spacing: .35px; }
.chev { width: 8px; height: 20px; margin: 0 10px 0 4px; }
.gicon { width: 40px; height: 28px; margin-right: 4px; }
.graph { width: 66px; }

/* panels */
.upper { display: flex; gap: 5px; height: 648px; flex: none; padding: 5px 0 0 1px; }
.leftcol { width: 286px; flex: none; display: flex; flex-direction: column; gap: 5px; }
.panel { display: flex; flex-direction: column; flex: none; }
.palette, .hierarchy { height: 319px; }
.tabs { height: 22px; flex: none; display: flex; gap: 1px; padding-left: 4px; }
.tab { width: 150px; height: 22px; background: #3e3e3e; border-radius: 3px 3px 0 0; display: flex; align-items: center; padding: 0 10px 0 6px; text-shadow: 1px 1px 1px #000; color: #e0e0e0; }
.tab.idle { background: #2e2e2e; }
.tab.active { border-top: 1px solid #b9a01c; border-radius: 0; }
.tab span { margin-left: 6px; }
.ticon { width: 16px; height: 14px; }
.ticon.big { height: 16px; }
.tab .x { width: 7px; height: 7px; margin-left: auto; color: #1c1c1c; }
.pbody { flex: 1; min-height: 0; background: #3e3e3e; display: flex; flex-direction: column; }
.search { height: 18px; background: #cbcbcb; border-radius: 2px; display: flex; align-items: center; justify-content: space-between; padding: 0 0 0 5px; color: #868686; flex: none; }
.search svg { width: 16px; height: 16px; color: #0d0d0d; }
.sp { margin: 6px 6px 4px 6px; }
.sh { margin: 8px 8px 4px 8px; }
.plist { display: flex; flex: 1; min-height: 0; overflow: hidden; margin-bottom: 2px; padding-left: 2px; gap: 3px; }
.rows { width: 266px; flex: none; }
.cat { height: 20px; background: #2f2f2f; display: flex; align-items: center; font-weight: 700; font-size: 12px; text-shadow: 1px 1px 1px #000; letter-spacing: .2px; }
.cat svg { width: 8px; height: 8px; margin: 0 4px 0 1px; }
.cat.part { height: 18px; }
.row { height: 20px; display: flex; align-items: center; padding-left: 22px; letter-spacing: .1px; }
.row .st { width: 10px; height: 10px; margin-right: 2px; }
.row .ic { width: 16px; height: 16px; margin-right: 2px; }
.row.sel { background: #8a8a8a; color: #000; }
.scroll { width: 11px; display: flex; flex-direction: column; background: linear-gradient(#5a5a5a, #5a5a5a) 5px 0 / 1px 100% no-repeat; }
.plist .scroll { margin-left: -1px; }
.scroll i { background: #fff; border-radius: 1px; height: 114px; margin-top: 3px; outline: 1px solid #222; }
.trees { padding: 0 4px; }
.tree { height: 16px; display: flex; align-items: center; padding-right: 3px; letter-spacing: .1px; }
.tree .ar { width: 8px; height: 8px; margin-right: 3px; }
.d0 { padding-left: 1px; } .d1 { padding-left: 11px; } .d2 { padding-left: 30px; }
.tree b { font-size: 12.500px; padding-top: 1px; letter-spacing: .15px; }
.cp { width: 12px; height: 12px; margin-right: 4px; }
.tree .pb { width: 16px; height: 10px; margin-right: 2px; }
.lk { width: 12px; height: 12px; margin: 0 6px 0 auto; }
.ey { width: 13px; height: 10px; }
.tree.sel { background: #8a8a8a; color: #000; }

/* viewport */
.viewport { position: relative; width: 1201px; flex: none; border: 2px solid #3e3e3e; height: 643px; }
.viewport .corner { left: -2px; top: -2px; }
.canvas { width: 1197px; height: 639px; }
.ruler text { font: 10px Roboto, sans-serif; fill: #999; }
.hud text { font: 700 20px Roboto, sans-serif; fill: #5b5b5b; }
.vtools { position: absolute; left: 744px; top: 19px; display: flex; align-items: flex-start; color: #111; }
.vg { height: 24px; background: #ababab; border-radius: 6px; outline: 1.500px solid #0c0c0c; display: flex; overflow: hidden; font-size: 12px; align-items: center; justify-content: center; }
.vg span { display: flex; align-items: center; justify-content: center; height: 24px; }
.vg span + span { border-left: 1px solid #111; }
.vg svg { width: 17px; height: 17px; }
.w23 { width: 23px; } .w24 { width: 24px; } .w46 { width: 46px; }
.vg .w46 { padding-top: 1px; }
.or { background: #bd740d; }
.vg.dim { background: #686868; }
.stack { flex-direction: column; gap: 4px; }
.stack em { border: 2px solid transparent; border-top-color: #111; border-bottom: 0; width: 5px; }
.vg .rr { color: #555; border-left: 0; font-size: 13px; }
.g1 { margin-right: 5px; } .g2 { width: 22px; margin-right: 2px; } .g3 { width: 22px; margin-right: 4px; }
.g4 { margin-right: 5px; } .g5 { margin-right: 2px; } .g6, .g7, .g8 { width: 22px; margin-right: 2px; }
.g8 { margin-right: 3px; }
.vg.g9, .vg.g10 { height: 20px; margin-top: 2px; gap: 2px; letter-spacing: -.05px; }
.vg .vd { width: 8px; height: 5px; }
.g9 { width: 79px; margin-right: 2px; } .g10 { width: 73px; }
.g7, .g8, .g6 { height: 23px; }
.tooltip { position: absolute; left: 855px; top: 49px; width: 300px; height: 32px; background: #efefef; border: 1px solid #fff; outline: 2px solid #0a0a0a; color: #111; display: flex; align-items: center; padding-left: 8px; letter-spacing: .07px; }

/* details */
.details { width: 420px; height: 643px; }
.namerow { display: flex; align-items: center; height: 18px; margin-top: 10px; padding-left: 8px; overflow: hidden; flex: none; }
.namerow .pb { width: 16px; height: 8px; margin-right: 3px; }
.nameinput { width: 200px; flex: none; height: 18px; border-radius: 4px; background: #d8d8d8; color: #111; padding: 3px 5px; margin-right: 7px; }
.cb { width: 14px; height: 14px; border-radius: 2px; background: #d0d0d0; flex: none; }
.cb.off { background: #adadad; margin-left: 1px; }
.isvar { margin-left: 4px; width: 75px; flex: none; letter-spacing: .1px; }
.openpb { flex: none; border-bottom: 1px dotted #ddd; padding-bottom: 2px; margin-top: 2px; letter-spacing: .75px; }
.searchrow { display: flex; align-items: center; height: 23px; margin: 8px 0 1px 4px; flex: none; }
.searchrow .search { width: 342px; margin-right: 9px; }
.matrix { width: 26px; height: 23px; background: linear-gradient(#e8e8e8, #aaa); border-radius: 1px; padding: 5px 6px; }
.matrix svg { width: 14px; height: 14px; }
.deye { width: 18px; height: 12px; margin: 0 3px 0 4px; }
.props { position: relative; flex: 1; min-height: 0; overflow: hidden; margin: 0 0 2px 2px; font-size: 10.670px; letter-spacing: .3px; color: #d0d0d0; background: linear-gradient(#262626, #262626) 140px 0 / 1px 100% no-repeat; }
.head { height: 29px; width: 416px; background: linear-gradient(#262626, #262626) 140px 0 / 1px 100% no-repeat, #2f2f2f; border-radius: 3px; display: flex; align-items: center; font-size: 12.500px; font-weight: 700; letter-spacing: .18px; color: #e0e0e0; text-shadow: 1px 1px 1px #000; padding-left: 3px; }
.head span { padding-top: 2px; }
.head .ar { margin-right: 4px; width: 7px; height: 7px; }
.second { margin-top: 2px; }
.p { display: flex; align-items: center; }
.p label { flex: 1; padding-top: 1px; }
.p .ar { width: 8px; height: 9px; margin-left: -13px; margin-right: 5px; margin-top: -1px; }
.p .v { width: 274px; display: flex; align-items: center; gap: 3px; }
.tg { width: 11px; height: 11px; margin-right: 6px; }
.l1 { padding-left: 16px; } .l2 { padding-left: 26px; } .l3 { padding-left: 36px; } .l4 { padding-left: 46px; }
.h20 { height: 20px; } .h22 { height: 22px; } .h24 { height: 24px; } .h26 { height: 26px; } .h28 { height: 28px; } .h33 { height: 33px; } .h78 { height: 78px; }
.n { width: 105px; height: 17px; background: #d8d8d8; border-radius: 3px; color: #222; display: flex; align-items: center; padding: 0 5px 0 4px; letter-spacing: 0; }
.n svg { width: 10px; height: 10px; margin-left: auto; }
.n.xy { width: 116px; padding-left: 3px; }
.n u { width: 14px; }
.anchors { width: 107px; height: 26px; margin-left: 1px; background: linear-gradient(#e6e6e6, #adadad); border: 1px solid #fff; border-color: #f4f4f4 #bbb #999 #eee; border-radius: 1px; color: #111; font-size: 12px; display: flex; align-items: center; justify-content: space-between; padding: 0 7px 0 5px; }
.anchors svg { width: 9px; height: 5px; }
.sw { width: 107px; height: 17px; margin-left: 1px; }
.bgsw { background: #b8b8b8; border: 1px solid #a6a6a6; }
.fillsw { background: linear-gradient(#fff 0, #dcdcdc 30%, #c6c6c6); margin-left: 0; width: 108px; border-right: 1px solid #fff; }
.thumb { width: 66px; height: 66px; margin: 2px 3px 0 4px; border: 1px solid #222; background: radial-gradient(circle at 50% 80%, #606060, #4a4a4a); box-shadow: 0 0 2px 1px #222; border-bottom: 3px solid #fff; display: flex; align-items: center; justify-content: center; font-size: 9px; color: #c4c4c4; letter-spacing: 0; text-shadow: 1px 1px 1px #111; }
.acombo { width: 158px; height: 19px; background: #5b5b5b; border-radius: 3px; display: flex; align-items: center; justify-content: space-between; padding: 0 4px 2px 3px; color: #fff; font-size: 11px; text-shadow: 1px 1px 1px #000; }
.acombo svg { width: 8px; height: 5px; margin-top: 2px; }
.abtns { display: flex; gap: 12px; padding: 6px 0 0 6px; height: 20px; color: #bbb; }
.abtns svg { width: 12px; height: 12px; }
.p .tint { width: 182px; height: 12px; background: #fff; }
.p .v .tint + .cb { margin-left: 0; }
.props .scroll { position: absolute; right: 4px; top: 0; bottom: 1px; width: 11px; }
.props .scroll i { height: 189px; margin-top: 2px; }

/* lower area */
.lower { display: flex; gap: 5px; padding: 5px 0 0 1px; height: 282px; flex: none; }
.anims { width: 287px; height: 276px; }
.arow { flex-direction: row; padding: 6px; gap: 2px; }
.addanim { width: 79px; height: 21px; background: #4ea24e; color: #fff; font-weight: 700; border-radius: 1px; display: flex; align-items: center; padding-left: 4px; gap: 3px; text-shadow: 1px 1px 1px #111; letter-spacing: -.05px; }
.addanim svg { width: 10px; height: 10px; }
.arow .search { width: 192px; margin-top: 2px; }
.results { width: 1625px; height: 276px; }
.log { margin: 6px 5px 0 6px; height: 211px; background: #222; padding-top: 2px; color: #999; }
.log p { margin: 0; height: 20px; display: flex; align-items: center; letter-spacing: .03px; }
.log p::before { content: ""; width: 4px; height: 4px; border-radius: 50%; background: #70c0f8; margin: 0 13px 0 9px; }
.clear { margin: 11px 11px 0 auto; color: #ddd; }

/* taskbar */
.taskbar { height: 40px; flex: none; display: flex; align-items: center; background: linear-gradient(90deg, #1d1d1b 0, #20201f 50%, #2a211b 85%, #26201c); font-family: "Open Sans", "Noto Sans", sans-serif; color: #fff; }
.win { width: 16px; height: 16px; margin: 0 16px 0 16px; }
.tsearch { width: 344px; height: 40px; background: #333; border: 1px solid #5a5a5a; display: flex; align-items: center; padding-left: 10px; gap: 12px; font-size: 14.500px; letter-spacing: -.32px; color: #ddd; }
.tsearch span { padding-top: 2px; }
.tsearch svg { width: 17px; height: 18px; }
.cort { width: 17px; height: 17px; margin-left: 15px; }
.tview { width: 17px; height: 16px; margin-left: 32px; }
.fold { width: 22px; height: 18px; margin-left: 31px; }
.cube { width: 22px; height: 24px; margin-left: 27px; }
.uapp, .capp { height: 40px; border-bottom: 2px solid #76b9ed; display: flex; align-items: center; justify-content: center; }
.uapp { width: 48px; margin-left: 13px; background: #4b4a49; }
.uapp svg, .capp svg { width: 24px; height: 24px; }
.capp { width: 40px; margin-left: 6px; }
.tray { margin-left: auto; display: flex; align-items: center; height: 40px; font-size: 12px; letter-spacing: -.2px; }
.caret { width: 12px; height: 7px; margin-right: 10px; }
.mon { width: 17px; height: 14px; margin-right: 7px; }
.spk { width: 17px; height: 14px; margin-right: 7px; }
.kbd { width: 23px; height: 14px; margin-right: 10px; }
.eng { width: 36px; }
.clock { width: 52px; display: flex; flex-direction: column; align-items: center; gap: 6px; margin-right: 19px; letter-spacing: -.45px; }
.note { width: 16px; height: 16px; margin-right: 19px; }
.edge { width: 1px; height: 40px; background: #888; margin-right: 5px; }
```
